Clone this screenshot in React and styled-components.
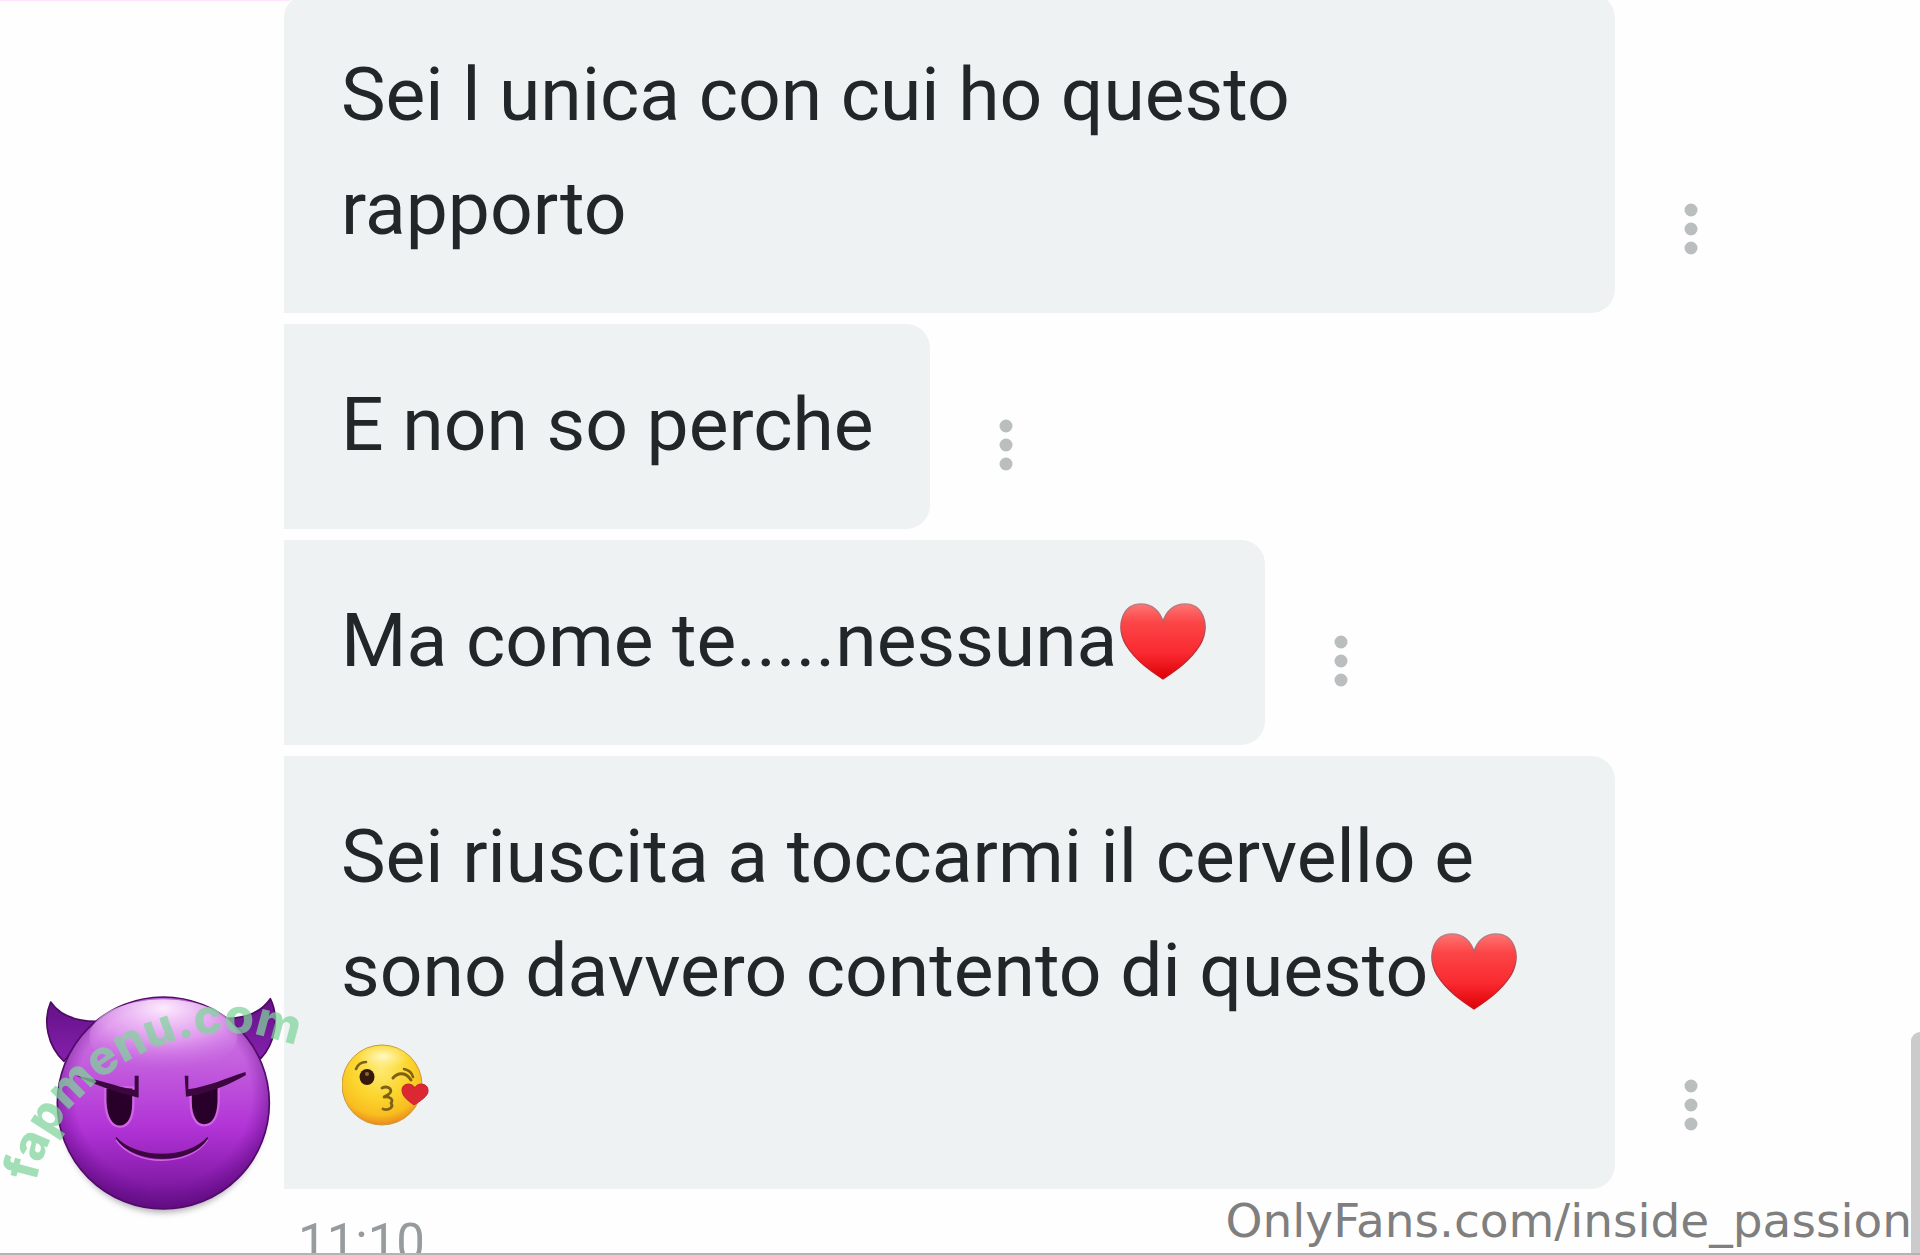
import React from "react";
import styled, { createGlobalStyle } from "styled-components";

const GlobalStyle = createGlobalStyle`
  * { box-sizing: border-box; }
  body { margin: 0; background: #fefefe; }
`;

const Screen = styled.main`
  position: relative;
  height: 100vh;
  overflow: hidden;
  background: #fefefe;
  font-family: Roboto, "Liberation Sans", sans-serif;
`;

const TopEdge = styled.div`
  position: absolute;
  top: 0;
  left: 0;
  width: 290px;
  height: 1px;
  background: #fde3fb;
`;

const Thread = styled.section`
  display: grid;
  grid-template-columns: 284px minmax(0, 1fr);
  margin-top: -6px;
`;

const AvatarSlot = styled.div`
  align-self: end;
  margin-bottom: -31px;
`;

const AvatarArt = styled.svg`
  display: block;
  width: 284px;
  height: 240px;
`;

const MessageList = styled.ul`
  display: flex;
  flex-direction: column;
  gap: 11px;
  margin: 0;
  padding: 0;
  list-style: none;
`;

const MessageRow = styled.li`
  display: flex;
  align-items: flex-end;
`;

const Bubble = styled.p`
  max-width: 1331px;
  margin: 0;
  padding: 43px 57px 48px;
  border-radius: ${(p) => (p.$first ? "24px 24px 24px 0" : "0 24px 24px 0")};
  background: #eef2f3;
  color: #212628;
  font-size: 75px;
  line-height: 114px;
`;

const EmojiArt = styled.svg`
  display: inline-block;
  width: 90px;
  height: 90px;
  margin-left: 1px;
  vertical-align: -22px;
`;

const MenuButton = styled.button`
  flex: none;
  display: flex;
  justify-content: center;
  align-items: center;
  width: 40px;
  height: 64px;
  margin: 0 0 52px 56px;
  padding: 0;
  border: 0;
  background: none;
  color: #babebf;
`;

const Time = styled.time`
  grid-column: 2;
  margin-top: 24px;
  padding-left: 14px;
  color: #969b9d;
  font-size: 51px;
  line-height: 60px;
`;

const ScrollThumb = styled.div`
  position: absolute;
  right: 0;
  bottom: 0;
  width: 9px;
  height: 223px;
  border-top-left-radius: 9px;
  background: #cbcbcb;
`;

const BottomEdge = styled.div`
  position: absolute;
  right: 0;
  bottom: 0;
  left: 0;
  height: 2px;
  background: #b4b4b4;
`;

const Credit = styled.div`
  position: absolute;
  right: 8px;
  bottom: 6px;
  color: #7f7f7f;
  font-family: "DejaVu Sans", sans-serif;
  font-size: 47px;
  line-height: 56px;
  white-space: nowrap;
`;

const SiteMark = styled.svg`
  position: absolute;
  bottom: 0;
  left: 0;
  width: 320px;
  height: 295px;
  pointer-events: none;

  text {
    fill: rgb(129, 212, 156);
    opacity: 0.73;
    font-family: Inter, "Liberation Sans", sans-serif;
    font-size: 48px;
    font-weight: 800;
  }
`;

function Heart() {
  return (
    <EmojiArt viewBox="0 0 90 90" role="img" aria-label="cuore rosso">
      <defs>
        <linearGradient id="heartFill" x1="0" y1="0" x2="0" y2="1">
          <stop offset="0" stopColor="#ff7472" />
          <stop offset="0.25" stopColor="#fb4547" />
          <stop offset="0.65" stopColor="#f92a30" />
          <stop offset="1" stopColor="#dd0005" />
        </linearGradient>
        <linearGradient id="heartEdge" x1="0" y1="0" x2="0" y2="1">
          <stop offset="0" stopColor="#c08084" />
          <stop offset="0.5" stopColor="#b43840" />
          <stop offset="1" stopColor="#d01218" />
        </linearGradient>
      </defs>
      <path
        d="M45 81 C33 73 18 63 8 47 C-3 27 5 6 23 6 C34 6 42 13 45 24 C48 13 56 6 67 6 C85 6 93 27 82 47 C72 63 57 73 45 81Z"
        fill="url(#heartFill)"
        stroke="url(#heartEdge)"
        strokeWidth="1.4"
      />
    </EmojiArt>
  );
}

function Kiss() {
  return (
    <EmojiArt viewBox="0 0 90 90" role="img" aria-label="faccina che manda un bacio">
      <defs>
        <radialGradient id="kissFill" cx="0.48" cy="0.3" r="0.72">
          <stop offset="0" stopColor="#fdea72" />
          <stop offset="0.5" stopColor="#fbd52c" />
          <stop offset="0.8" stopColor="#f8bd20" />
          <stop offset="1" stopColor="#e9801c" />
        </radialGradient>
        <radialGradient id="kissShine" cx="0.5" cy="0.4" r="0.5">
          <stop offset="0" stopColor="#fffbd0" stopOpacity="0.9" />
          <stop offset="1" stopColor="#fff3a0" stopOpacity="0" />
        </radialGradient>
      </defs>
      <circle cx="40" cy="43" r="40" fill="url(#kissFill)" stroke="#c99a3d" strokeWidth="1" />
      <ellipse cx="41" cy="17" rx="27" ry="13" fill="url(#kissShine)" />
      <ellipse cx="25" cy="35" rx="7.5" ry="8" fill="#35190a" />
      <circle cx="25" cy="32" r="2" fill="#8b6744" />
      <g fill="none" stroke="#806014" strokeLinecap="round" strokeLinejoin="round">
        <path d="M14 27 C16 22 20 20 24 20" strokeWidth="2.6" />
        <path d="M51 36 C56 30 64 30 69 38" strokeWidth="3" />
        <path d="M62 27 C67 28 70 31 71 35" strokeWidth="2.6" />
        <path d="M40 46 C46 43 52 48 47 52 C45 54 42 54 42 55 C48 54 52 58 49 61 C52 65 47 69 41 67" strokeWidth="2.8" />
      </g>
      <path
        d="M72 63 C67 59 60 55 60 48 C60 41 70 40 73 46 C75 40 86 41 86 48 C87 54 78 59 72 63Z"
        fill="#dc2832"
        stroke="#c7222c"
        strokeWidth="1"
      />
    </EmojiArt>
  );
}

function DevilAvatar() {
  return (
    <AvatarArt viewBox="0 60 852 720" role="img" aria-label="diavoletto viola">
      <defs>
        <linearGradient id="devilFill" x1="0" y1="0" x2="0" y2="1">
          <stop offset="0" stopColor="#cf83e2" />
          <stop offset="0.3" stopColor="#c460de" />
          <stop offset="0.62" stopColor="#b133d6" />
          <stop offset="0.82" stopColor="#8e20b2" />
          <stop offset="1" stopColor="#6c1390" />
        </linearGradient>
        <radialGradient id="devilShade" cx="0.5" cy="0.46" r="0.53">
          <stop offset="0.78" stopColor="#6a0c92" stopOpacity="0" />
          <stop offset="1" stopColor="#5a0879" stopOpacity="0.6" />
        </radialGradient>
        <radialGradient id="devilShine" cx="0.5" cy="0.12" r="0.82">
          <stop offset="0" stopColor="#fff0ff" stopOpacity="0.95" />
          <stop offset="0.55" stopColor="#efb5f7" stopOpacity="0.6" />
          <stop offset="1" stopColor="#d176ea" stopOpacity="0" />
        </radialGradient>
        <linearGradient id="hornFill" x1="0" y1="0" x2="0" y2="1">
          <stop offset="0" stopColor="#651188" />
          <stop offset="1" stopColor="#8420ac" />
        </linearGradient>
        <filter id="devilShadow" x="-10%" y="-10%" width="120%" height="120%">
          <feGaussianBlur stdDeviation="10" />
        </filter>
      </defs>
      <ellipse cx="490" cy="452" rx="304" ry="306" fill="#77707b" opacity="0.55" filter="url(#devilShadow)" />
      <g fill="url(#hornFill)" stroke="#4d0b62" strokeWidth="5" strokeLinejoin="round">
        <path d="M152 126 C178 164 222 183 286 184 L192 304 C142 258 128 183 152 126Z" />
        <path d="M811 116 C785 154 745 174 672 176 L782 296 C824 252 840 176 811 116Z" />
      </g>
      <circle cx="490" cy="429" r="318" fill="url(#devilFill)" />
      <circle cx="490" cy="429" r="318" fill="url(#devilShade)" stroke="#520b69" strokeWidth="5" />
      <ellipse cx="490" cy="230" rx="222" ry="112" fill="url(#devilShine)" />
      <g fill="#280029" stroke="#d265e5" strokeWidth="7" strokeLinejoin="round">
        <path d="M316 382 H400 V430 C400 475 384 500 360 500 C333 500 318 470 316 425Z" />
        <path d="M572 400 L656 366 V425 C654 474 636 496 612 496 C588 496 572 468 572 425Z" />
      </g>
      <g fill="#3b073e">
        <path d="M229 347 C284 355 343 377 404 390 V347 H416 V413 C347 397 277 371 229 347Z" />
        <path d="M554 347 H565 V388 C628 378 680 354 736 336 L738 345 C688 373 636 398 558 410Z" />
      </g>
      <path d="M348 540 C404 622 570 620 623 540" fill="none" stroke="#d267e2" strokeWidth="4" />
      <path d="M348 533 C408 599 560 601 623 533 C578 613 403 617 348 533Z" fill="#3b073e" stroke="#3b073e" strokeWidth="4" />
    </AvatarArt>
  );
}

function DotsMenu() {
  return (
    <MenuButton type="button" aria-label="Altre opzioni">
      <svg width="14" height="52" viewBox="0 0 14 52" fill="currentColor" aria-hidden="true">
        <circle cx="7" cy="7" r="6.5" />
        <circle cx="7" cy="26" r="6.5" />
        <circle cx="7" cy="45" r="6.5" />
      </svg>
    </MenuButton>
  );
}

const messages = [
  { id: 1, body: "Sei l unica con cui ho questo rapporto" },
  { id: 2, body: "E non so perche" },
  { id: 3, body: <>Ma come te.....nessuna<Heart /></> },
  { id: 4, body: <>Sei riuscita a toccarmi il cervello e sono davvero contento di questo<Heart /><Kiss /></> },
];

export default function App() {
  return (
    <>
      <GlobalStyle />
      <Screen>
        <TopEdge />
        <Thread>
          <AvatarSlot>
            <DevilAvatar />
          </AvatarSlot>
          <MessageList>
            {messages.map((message, index) => (
              <MessageRow key={message.id}>
                <Bubble $first={index === 0}>{message.body}</Bubble>
                <DotsMenu />
              </MessageRow>
            ))}
          </MessageList>
          <Time dateTime="11:10">11:10</Time>
        </Thread>
        <ScrollThumb />
        <Credit>OnlyFans.com/inside_passion</Credit>
        <SiteMark viewBox="0 0 320 295">
          <path id="siteArc" d="M36 222 C50 154 100 112 150 90 S250 66 306 90" fill="none" />
          <text>
            <textPath href="#siteArc">fapmenu.com</textPath>
          </text>
        </SiteMark>
        <BottomEdge />
      </Screen>
    </>
  );
}
